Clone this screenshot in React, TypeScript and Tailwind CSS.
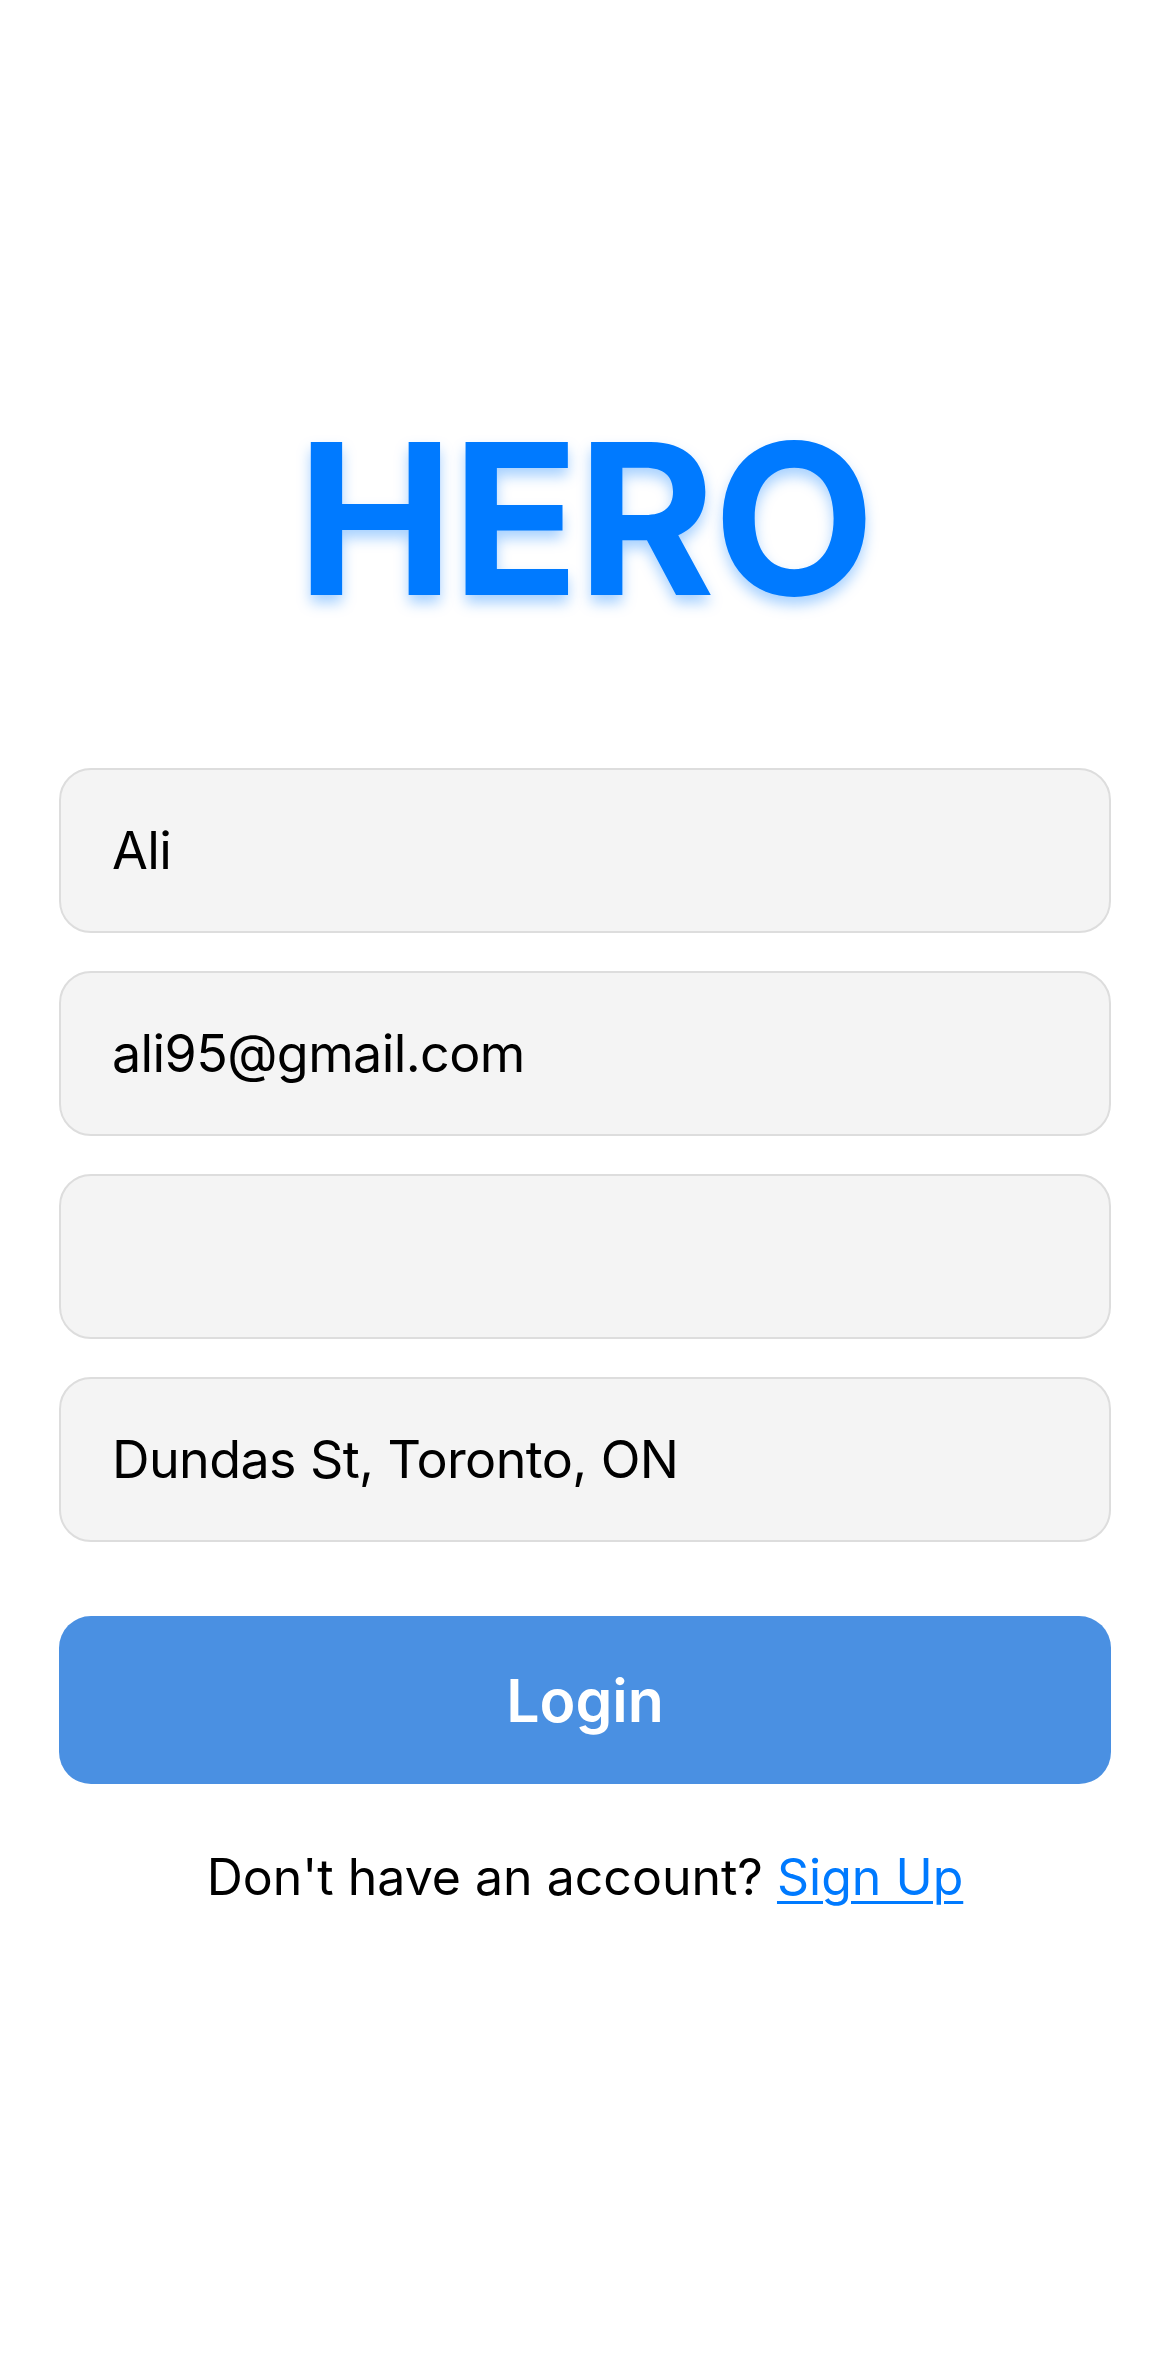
import React from "react";

const fields = ["Ali", "ali95@gmail.com", "", "Dundas St, Toronto, ON"];

const LoginPage = () => {
  return (
    <div className="min-h-[2356px] w-full bg-white font-['Inter','Noto_Sans',sans-serif] text-black">
      <div className="flex flex-col px-[59px] pt-[414px]">
        <h1 className="text-center text-[210px] font-bold leading-none tracking-[-2px] text-[#007aff] [text-shadow:0_8px_14px_rgba(0,122,255,0.35)]">
          HERO
        </h1>

        <div className="mt-[144px] flex flex-col gap-[38px]">
          {fields.map((value, i) => (
            <div
              key={i}
              className="flex h-[165px] items-center rounded-[32px] border-2 border-[#dddddd] bg-[#f4f4f4] px-[51px] text-[52px] leading-none tracking-[-0.6px]"
            >
              {value}
            </div>
          ))}
        </div>

        <button className="mt-[74px] flex h-[168px] items-center justify-center rounded-[32px] bg-[#4a90e2] text-[59px] font-semibold leading-none text-white">
          Login
        </button>

        <p className="mt-[68px] text-center text-[50px] leading-none">
          Don't have an account?{" "}
          <a className="text-[#007aff] underline underline-offset-[6px] decoration-[3px]">Sign Up</a>
        </p>
      </div>
    </div>
  );
};

export default function App() {
  return <LoginPage />;
}
